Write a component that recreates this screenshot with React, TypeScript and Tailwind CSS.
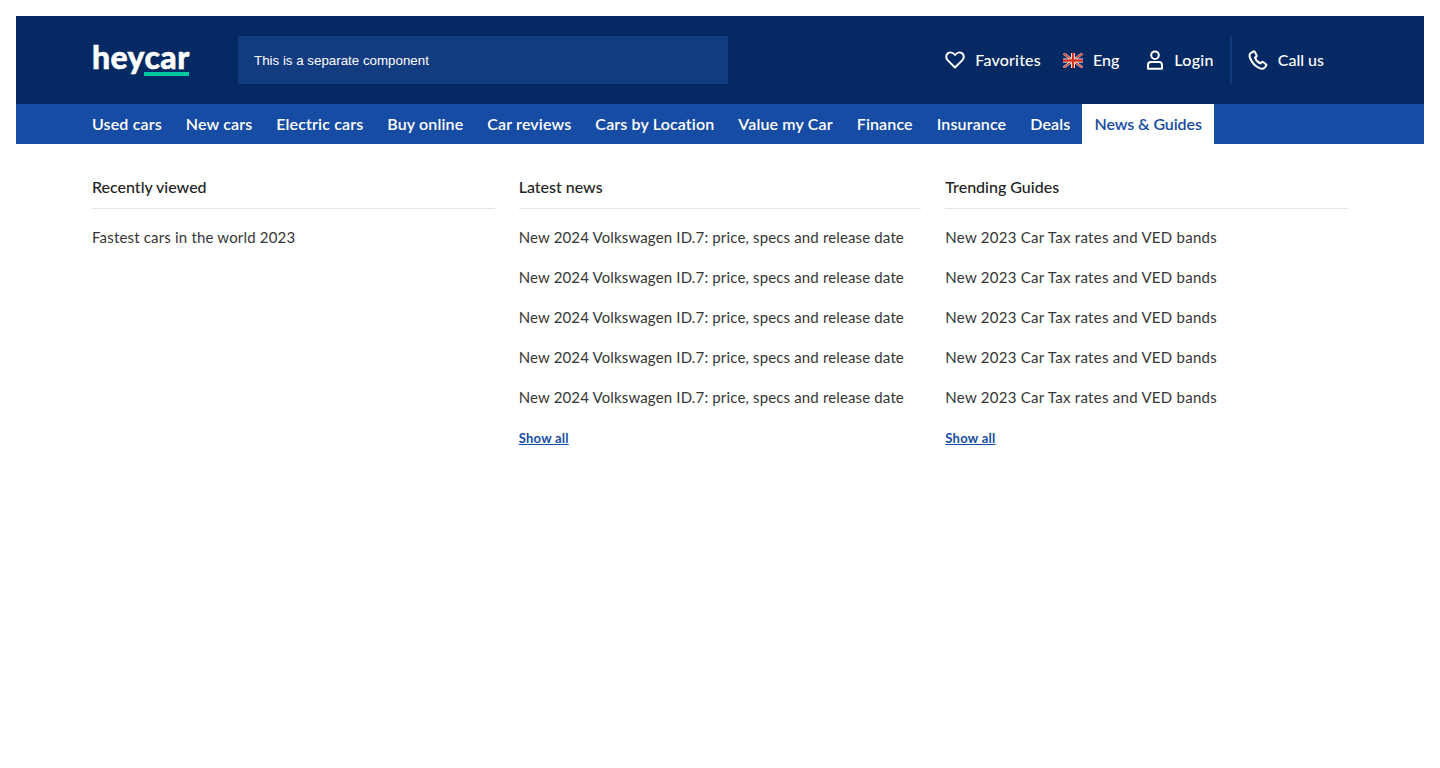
import React from "react";

const navItems = ["Used cars", "New cars", "Electric cars", "Buy online", "Car reviews", "Cars by Location", "Value my Car", "Finance", "Insurance", "Deals"];

function Column({ title, items, showAll, itemClass }: { title: string; items: string[]; showAll?: boolean; itemClass: string }) {
  return (
    <div className="flex flex-col">
      <div className="h-[33px] border-b border-[#e5e5e5] text-[16px] leading-[22px] font-medium text-[#222222]">{title}</div>
      <ul className="flex flex-col pt-[8px]">
        {items.map((t, i) => (
          <li key={i} className={"h-[40px] flex items-center text-[15px] text-[#363636] " + itemClass}>{t}</li>
        ))}
      </ul>
      {showAll && (
        <a className="mt-[12px] text-[13px] leading-[18px] tracking-[0.25px] font-bold text-[#164ca3] underline">Show all</a>
      )}
    </div>
  );
}

function HeaderLink({ icon, label, className }: { icon: React.ReactNode; label: string; className?: string }) {
  return (
    <div className={"flex items-center gap-[10px] text-[16px] font-medium text-white " + (className ?? "")}>
      {icon}
      <span>{label}</span>
    </div>
  );
}

export default function App() {
  return (
    <div className="min-h-[768px] bg-white p-4 font-['Lato','Liberation_Sans',sans-serif]">
      <header className="h-[88px] bg-[#052962] flex items-center pl-[76px]">
        <div className="relative w-[97px] h-[32px] mr-[49px] shrink-0">
          <span className="absolute left-0 top-[-3px] text-[32px] leading-[32px] font-black tracking-[0.4px] text-white [-webkit-text-stroke:0.5px_white]">heycar</span>
          <div className="absolute left-[52px] right-0 bottom-[0.5px] h-[4px] bg-[#00c9a0]" />
        </div>
        <div className="w-[490px] h-[48px] bg-[#133b80] flex items-center pl-4 pt-[1px] text-[13.333px] text-white font-['Liberation_Sans',sans-serif]">
          This is a separate component
        </div>
        <div className="ml-auto flex items-center h-[48px] pr-[100px]">
          <HeaderLink
            className="mr-[22px] tracking-[0.2px]"
            label="Favorites"
            icon={
              <svg width="20" height="18" viewBox="0 0 20 18" fill="none" stroke="white" strokeWidth="2" strokeLinejoin="round">
                <path d="M10 16.500 2.800 9.400C.6 7.200.8 4 2.800 2.400 5 .7 8 1.500 10 4c2-2.500 5-3.300 7.200-1.600 2 1.600 2.200 4.800 0 7L10 16.500Z" />
              </svg>
            }
          />
          <HeaderLink
            className="mr-[27px]"
            label="Eng"
            icon={
              <svg width="20" height="15" viewBox="0 0 20 15">
                <path d="M0 0 20 15M20 0 0 15" stroke="white" strokeWidth="2.400" />
                <path d="M0 0 20 15M20 0 0 15" stroke="#d6301c" strokeWidth="1.400" />
                <path d="M10 0V15M0 7.500H20" stroke="white" strokeWidth="4" />
                <path d="M10 0V15M0 7.500H20" stroke="#d6301c" strokeWidth="2.400" />
              </svg>
            }
          />
          <HeaderLink
            className="tracking-[0.3px]"
            label="Login"
            icon={
              <svg width="18" height="20" viewBox="0 0 18 20" fill="none" stroke="white" strokeWidth="2">
                <circle cx="9" cy="5.200" r="3.800" />
                <path d="M2 18.800V15a3 3 0 0 1 3-3h8a3 3 0 0 1 3 3v3.800H2Z" strokeLinejoin="round" />
              </svg>
            }
          />
          <div className="w-[2px] h-[48px] bg-[#133b80] ml-4 mr-[16px]" />
          <HeaderLink
            label="Call us"
            icon={
              <svg width="20" height="20" viewBox="0 0 20 20" fill="none" stroke="white" strokeWidth="2" strokeLinejoin="round" strokeLinecap="round">
                <path d="M5.500 1.500 3 2.800C1.300 3.800 1.200 6 2.300 8.500c1.600 3.700 5.400 8 9.200 9.700 2.200 1 4.300.6 5.400-.8l1.300-1.900a1 1 0 0 0-.2-1.300l-3-2.200a1 1 0 0 0-1.300.1l-1.200 1.300c-2.400-.9-4.600-3.200-5.500-5.800l1.300-1a1 1 0 0 0 .3-1.200L6.900 2a1 1 0 0 0-1.400-.5Z" />
              </svg>
            }
          />
        </div>
      </header>
      <nav className="h-[40px] bg-[#164ca3] flex pl-[64px]">
        {navItems.map((t) => (
          <a key={t} className="px-3 h-full flex items-center text-[16px] tracking-[0.14px] font-semibold text-white">{t}</a>
        ))}
        <a className="px-3 h-full flex items-center bg-white text-[16px] tracking-[-0.08px] font-semibold text-[#164ca3]">News &amp; Guides</a>
      </nav>
      <main className="grid grid-cols-3 gap-x-6 mx-[76px] pt-[32px]">
        <Column title="Recently viewed" items={["Fastest cars in the world 2023"]} itemClass="tracking-[0.18px]" />
        <Column title="Latest news" items={Array(5).fill("New 2024 Volkswagen ID.7: price, specs and release date")} itemClass="tracking-[0.15px]" showAll />
        <Column title="Trending Guides" items={Array(5).fill("New 2023 Car Tax rates and VED bands")} itemClass="tracking-[0.27px]" showAll />
      </main>
    </div>
  );
}
